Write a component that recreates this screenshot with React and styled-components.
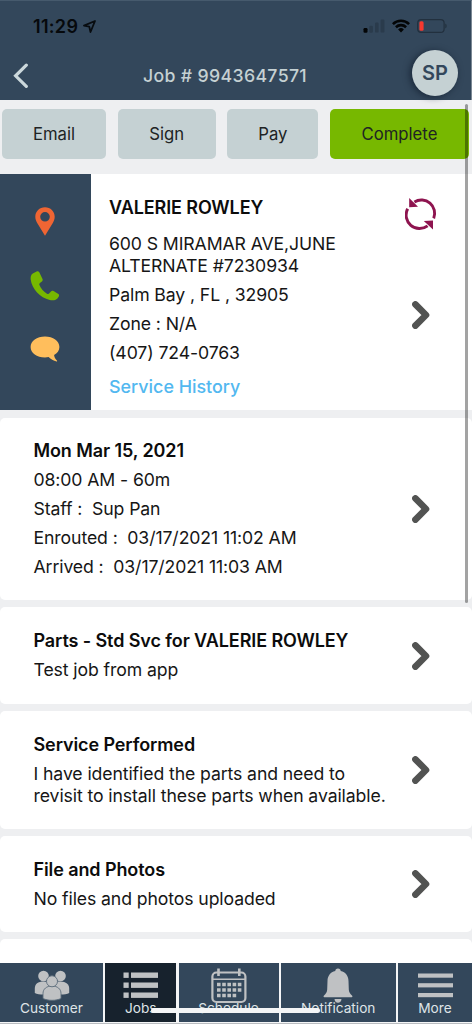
import React from 'react';
import styled, { createGlobalStyle } from 'styled-components';

const Colors = {
  navy: '#33475b',
  active: '#17222d',
  mist: '#c5d1d3',
  page: '#eeeff1',
  green: '#77b800',
  text: '#161616',
  link: '#52b8f0',
  icon: '#bfc1c3'
};

const SignalIcon = () => (
  <svg width="22" height="14" viewBox="0 0 22 14">
    <rect x="0.5" y="9" width="4" height="4.8" rx="1.2" fill="#030506" />
    <rect x="6.3" y="6.7" width="3.6" height="7" rx="1.2" fill="#2a3b4c" />
    <rect x="12" y="3.6" width="3.6" height="10" rx="1.2" fill="#2a3b4c" />
    <rect x="17.6" y="0.4" width="3.8" height="13.2" rx="1.2" fill="#2a3b4c" />
  </svg>
);

const WifiIcon = () => (
  <svg width="18" height="14" viewBox="0 0 18 14" fill="none" stroke="#030506" strokeWidth="2.6">
    <path d="M0.9 5.1a11.6 11.6 0 0 1 16.2 0" />
    <path d="M3.9 8.2a7.4 7.4 0 0 1 10.2 0" />
    <path d="M9 13.4L6.1 10.4a4.1 4.1 0 0 1 5.8 0z" fill="#030506" stroke="none" />
  </svg>
);

const BatteryIcon = () => (
  <svg width="30" height="14" viewBox="0 0 30 14">
    <rect x="0.7" y="0.7" width="26.4" height="12.6" rx="3.4" fill="none" stroke="#22303e" strokeWidth="1.2" />
    <path d="M28.3 4.6q1.4 0.6 1.4 2.4t-1.4 2.4z" fill="#22303e" />
    <rect x="2.4" y="2.2" width="4.2" height="9.6" rx="1.5" fill="#f8392f" />
  </svg>
);

const LocationIcon = () => (
  <svg width="13" height="13" viewBox="0 0 13 13" fill="none" stroke="#080c10" strokeWidth="1.8" strokeLinejoin="round">
    <path d="M12 1L1 5.7l5.3 1L7.5 12z" />
  </svg>
);

const BackIcon = () => (
  <svg width="16" height="26" viewBox="0 0 16 26" fill="none" stroke="#ccd8dc" strokeWidth="3.2" strokeLinecap="round">
    <path d="M13.3 2.2L2.6 12.8l10.7 10.6" />
  </svg>
);

const PinIcon = () => (
  <svg width="20" height="29" viewBox="0 0 20 29">
    <path
      fillRule="evenodd"
      fill="#ef6533"
      d="M10 0.3c-5.5 0-9.7 4.2-9.7 9.5 0 2.4 0.8 4.2 1.9 6.1L10 28.8l7.8-12.9c1.1-1.9 1.9-3.7 1.9-6.1 0-5.3-4.2-9.5-9.7-9.5zM10 5a4.8 4.8 0 1 1 0 9.6A4.8 4.8 0 0 1 10 5z"
    />
  </svg>
);

const PhoneIcon = () => (
  <svg width="30" height="30" viewBox="0 0 30 30">
    <path
      fill="#77b800"
      d="M6.6 0.4L2.8 2.5C0.9 3.7 0.4 6 0.7 8.6c1.1 9.4 9.5 18.4 19 20.4 3.3 0.7 6 0.2 7.7-1.6l1.4-2c0.5-0.8 0.4-1.8-0.4-2.5l-4.9-2.8c-0.9-0.5-1.8-0.4-2.5 0.3l-2 2.1c-0.6 0.6-1.3 0.7-2 0.3-3.3-2-6.2-5.2-7.6-8.8-0.3-0.8-0.1-1.5 0.5-2l2-1.6c0.8-0.7 1-1.6 0.6-2.5L9.3 1.3C8.8 0.3 7.6 0 6.6 0.4z"
    />
  </svg>
);

const ChatIcon = () => (
  <svg width="30" height="26" viewBox="0 0 30 26">
    <path
      fill="#ffbe5c"
      d="M15 0.4C6.9 0.4 0.6 4.9 0.6 10.9S6.9 21.4 15 21.4c1.3 0 2.5-0.1 3.6-0.3 2.1 2.3 4.9 3.9 8 4.3 0.6 0 0.7-0.5 0.3-1-1.600-1.500-2.600-3.200-2.800-5.300 3.200-1.900 5.300-4.900 5.300-8.200C29.400 4.900 23.100 0.400 15 0.400z"
    />
  </svg>
);

const RefreshIcon = () => (
  <svg width="32" height="32" viewBox="0 0 32 32">
    <g fill="none" stroke="#8e144f" strokeWidth="2.9">
      <path d="M9.4 3.9A13.400 13.400 0 0 1 28.700 20.400" />
      <path d="M22.600 27.800A13.400 13.400 0 0 1 2.700 10.800" />
    </g>
    <g fill="#8e144f">
      <path d="M4.200 0L13 8.800L4.200 9.200z" />
      <path d="M28 31.600L18.800 22.900L28 22.500z" />
    </g>
  </svg>
);

const Chevron = () => (
  <ChevronSvg width="18" height="28" viewBox="0 0 18 28">
    <path d="M3.4 3.4L14 14L3.4 24.6" />
  </ChevronSvg>
);

const CustomerIcon = () => (
  <svg width="36" height="31" viewBox="0 0 36 31" fill={Colors.icon}>
    <circle cx="9.500" cy="6" r="5.300" />
    <circle cx="26.500" cy="6" r="5.300" />
    <path d="M0.800 18.500c0-4.500 3-7 9-7s9 3 9 7v4.500c-5 2-14 2-18 0z" />
    <path d="M17.200 18.500c0-4.500 3-7 9-7s9 3 9 7v4.500c-4 2-13 2-18 0z" />
    <g stroke="#5b6c7b" strokeWidth="0.900">
      <path d="M9 23.500c0-4.500 3.500-7.500 9-7.500s9 3 9 7.500v5c-5 2.400-13 2.400-18 0z" />
      <circle cx="18" cy="11.300" r="5.500" />
    </g>
  </svg>
);

const JobsIcon = () => (
  <svg width="36" height="27" viewBox="0 0 36 27" fill={Colors.icon}>
    {[0.5, 10.5, 20.5].map(y => (
      <React.Fragment key={y}>
        <rect x="0.5" y={y} width="5.2" height="5.4" />
        <rect x="8" y={y} width="27" height="5.4" />
      </React.Fragment>
    ))}
  </svg>
);

const ScheduleIcon = () => (
  <svg width="36" height="36" viewBox="0 0 36 36" fill="none" stroke={Colors.icon}>
    <rect x="1.4" y="4.5" width="33" height="29.5" rx="4" strokeWidth="2.2" />
    <path d="M1.5 11.300h33" strokeWidth="1.600" />
    <path d="M7.500 0.500v7.500M28.300 0.500v7.500" strokeWidth="2.600" />
    <path d="M6 16.500h24.500M6 22h24.500M6 27.500h19.500" strokeWidth="3.600" strokeDasharray="3.600 1.600" />
  </svg>
);

const BellIcon = () => (
  <svg width="30" height="36" viewBox="0 0 30 36" fill={Colors.icon}>
    <path d="M15 0.5c-1.7 0-2.7 1-2.7 2.6C7.3 4.3 4.6 8 4.5 13l-0.3 8.5c-0.1 2.3-1.2 4.3-3.4 6.300-0.500 0.600-0.200 1.400 0.500 1.400h27.400c0.700 0 1-0.800 0.500-1.400-2.200-2-3.300-4-3.400-6.300L25.500 13c-0.100-5-2.800-8.700-7.800-9.900 0-1.600-1-2.600-2.700-2.600z" />
    <path d="M11.500 31h7c-0.300 2.500-1.500 3.800-3.500 3.800s-3.200-1.300-3.500-3.800z" />
  </svg>
);

const MoreIcon = () => (
  <svg width="35" height="25" viewBox="0 0 35 25" fill={Colors.icon}>
    <rect y="0.5" width="35" height="4.2" />
    <rect y="10.2" width="35" height="4.2" />
    <rect y="20" width="35" height="4.2" />
  </svg>
);

const actions = [
  { label: 'Email', width: 104 },
  { label: 'Sign', width: 98 },
  { label: 'Pay', width: 91 },
  { label: 'Complete', width: 139, primary: true }
];

const cards = [
  {
    title: 'Mon Mar 15, 2021',
    height: 182,
    lines: [
      '08:00 AM - 60m',
      'Staff :  Sup Pan',
      'Enrouted :  03/17/2021 11:02 AM',
      'Arrived :  03/17/2021 11:03 AM'
    ]
  },
  {
    title: 'Parts - Std Svc for VALERIE ROWLEY',
    height: 97,
    lines: ['Test job from app']
  },
  {
    title: 'Service Performed',
    height: 118,
    lines: [
      'I have identified the parts and need to\nrevisit to install these parts when available.'
    ]
  },
  {
    title: 'File and Photos',
    height: 96,
    lines: ['No files and photos uploaded']
  }
];

const navItems = [
  { label: 'Customer', width: 103, icon: <CustomerIcon /> },
  { label: 'Jobs', width: 71, icon: <JobsIcon />, active: true },
  { label: 'Schedule', width: 100, icon: <ScheduleIcon /> },
  { label: 'Notification', width: 115, icon: <BellIcon /> },
  { label: 'More', width: 74, icon: <MoreIcon /> }
];

const App = () => (
  <Screen>
    <GlobalStyle />
    <Header>
      <StatusBar>
        <Clock>
          11:29
          <LocationIcon />
        </Clock>
        <StatusIcons>
          <SignalIcon />
          <WifiIcon />
          <BatteryIcon />
        </StatusIcons>
      </StatusBar>
      <TitleBar>
        <BackIcon />
        <JobTitle>Job # 9943647571</JobTitle>
        <Avatar>SP</Avatar>
      </TitleBar>
    </Header>

    <Actions>
      {actions.map(item => (
        <ActionButton key={item.label} $width={item.width} $primary={item.primary}>
          {item.label}
        </ActionButton>
      ))}
    </Actions>

    <Content>
      <CustomerCard>
        <ContactRail>
          <PinIcon />
          <PhoneIcon />
          <ChatIcon />
        </ContactRail>
        <CustomerInfo>
          <CustomerName>VALERIE ROWLEY</CustomerName>
          <Line>{'600 S MIRAMAR AVE,JUNE\nALTERNATE #7230934'}</Line>
          <Line>Palm Bay , FL , 32905</Line>
          <Line>Zone : N/A</Line>
          <Line>(407) 724-0763</Line>
          <HistoryLink>Service History</HistoryLink>
        </CustomerInfo>
        <CustomerControls>
          <RefreshIcon />
          <Chevron />
        </CustomerControls>
      </CustomerCard>

      {cards.map(card => (
        <Card key={card.title} $height={card.height}>
          <CardBody>
            <CardTitle>{card.title}</CardTitle>
            {card.lines.map(line => (
              <Line key={line}>{line}</Line>
            ))}
          </CardBody>
          <Chevron />
        </Card>
      ))}
      <Card $height={40} />
      <ScrollThumb />
    </Content>

    <BottomNav>
      {navItems.map(item => (
        <NavItem key={item.label} $width={item.width} $active={item.active}>
          <NavIcon>{item.icon}</NavIcon>
          <NavLabel>{item.label}</NavLabel>
        </NavItem>
      ))}
      <HomeIndicator />
    </BottomNav>
  </Screen>
);

export default App;

const GlobalStyle = createGlobalStyle`
  * {
    box-sizing: border-box;
  }

  body {
    margin: 0;
    background: ${Colors.page};
    font-family: Inter, Roboto, sans-serif;
  }

  svg {
    display: block;
    flex-shrink: 0;
  }
`;

const Screen = styled.div`
  position: relative;
  display: flex;
  flex-direction: column;
  width: 472px;
  height: 1024px;
  overflow: hidden;
  background: ${Colors.page};
  color: ${Colors.text};
`;

const Header = styled.header`
  flex: none;
  height: 100px;
  background: ${Colors.navy};
  border-top: 1px solid #465a6d;
  border-right: 1px solid #7b8894;
`;

const StatusBar = styled.div`
  display: flex;
  align-items: center;
  justify-content: space-between;
  height: 50px;
  padding: 0 24px 0 33px;
`;

const Clock = styled.div`
  display: flex;
  align-items: center;
  gap: 5px;
  color: #06090c;
  font-size: 18px;
  font-weight: 600;
  letter-spacing: 0.3px;
`;

const StatusIcons = styled.div`
  display: flex;
  align-items: center;
  gap: 7px;
`;

const TitleBar = styled.div`
  display: grid;
  grid-template-columns: 26px 1fr 60px;
  align-items: center;
  height: 49px;
  padding-left: 13px;
`;

const JobTitle = styled.h1`
  margin: 0;
  color: ${Colors.mist};
  font-size: 17.7px;
  font-weight: 500;
  line-height: 22px;
  letter-spacing: 0.35px;
  text-align: center;
`;

const Avatar = styled.div`
  width: 46px;
  height: 46px;
  margin: -5px 0 0 1px;
  border-radius: 50%;
  background: ${Colors.mist};
  box-shadow: -2px 1px 7px rgba(10, 20, 35, 0.6);
  color: ${Colors.navy};
  font-size: 20px;
  font-weight: 600;
  line-height: 46px;
  text-align: center;
`;

const Actions = styled.div`
  display: flex;
  flex: none;
  justify-content: space-between;
  height: 74px;
  padding: 9px 3px 0 2px;
`;

const ActionButton = styled.button`
  width: ${props => props.$width}px;
  height: 50px;
  padding: 0;
  border: 0;
  border-radius: 5px;
  background: ${props => (props.$primary ? Colors.green : Colors.mist)};
  color: #202324;
  font-family: inherit;
  font-size: 16.7px;
`;

const Content = styled.main`
  display: flex;
  flex: 1;
  flex-direction: column;
  gap: 7px;
  min-height: 0;
  overflow: hidden;
`;

const CustomerCard = styled.section`
  display: flex;
  flex: none;
  height: 236px;
  margin-bottom: 1px;
  background: #fff;
`;

const ContactRail = styled.div`
  display: flex;
  flex-direction: column;
  align-items: center;
  gap: 35px;
  width: 90.5px;
  padding-top: 33px;
  background: ${Colors.navy};
`;

const CustomerInfo = styled.div`
  display: flex;
  flex: 1;
  flex-direction: column;
  gap: 7px;
  padding: 23px 0 0 18.5px;
`;

const Line = styled.p`
  margin: 0;
  font-size: 17.65px;
  line-height: 22px;
  letter-spacing: -0.1px;
  white-space: pre;
`;

const CardTitle = styled.h2`
  margin: 0;
  color: #0c0c0c;
  font-size: 18px;
  font-weight: 600;
  line-height: 22px;
  letter-spacing: -0.1px;
  white-space: pre;
`;

const CustomerName = styled(CardTitle)`
  margin-bottom: 7px;
`;

const HistoryLink = styled.a`
  margin-top: 5px;
  color: ${Colors.link};
  font-size: 17.9px;
  font-weight: 500;
  line-height: 22px;
`;

const CustomerControls = styled.div`
  display: flex;
  flex-direction: column;
  align-items: center;
  gap: 71px;
  padding: 24px 35px 0 0;
`;

const ChevronSvg = styled.svg`
  fill: none;
  stroke: #525352;
  stroke-width: 6.6;
  stroke-linecap: round;
  stroke-linejoin: round;
`;

const Card = styled.section`
  display: flex;
  flex: none;
  align-items: center;
  justify-content: space-between;
  height: ${props => props.$height}px;
  padding: 0 42.5px 0 33.5px;
  border-radius: 5px;
  background: #fff;
`;

const CardBody = styled.div`
  display: flex;
  flex-direction: column;
  gap: 7px;
`;

const ScrollThumb = styled.div`
  position: absolute;
  top: 104px;
  left: 465px;
  width: 3px;
  height: 499px;
  border-radius: 2px;
  background: rgba(0, 0, 0, 0.36);
`;

const BottomNav = styled.nav`
  position: relative;
  display: flex;
  flex: none;
  justify-content: space-between;
  height: 61.5px;
  padding-bottom: 1.5px;
  border-bottom: 1px solid #b9bcc0;
  background: #f4f5f6;
`;

const NavItem = styled.a`
  display: flex;
  flex-direction: column;
  align-items: center;
  width: ${props => props.$width}px;
  background: ${props => (props.$active ? Colors.active : Colors.navy)};
`;

const NavIcon = styled.div`
  display: flex;
  align-items: center;
  height: 37px;
  margin-top: 4.5px;
`;

const NavLabel = styled.span`
  color: #dfe4e7;
  font-size: 13.7px;
  line-height: 16px;
  margin-top: -4px;
`;

const HomeIndicator = styled.div`
  position: absolute;
  top: 45px;
  left: 151px;
  width: 169px;
  height: 5.5px;
  border-radius: 3px;
  background: #f4f5f6;
`;
